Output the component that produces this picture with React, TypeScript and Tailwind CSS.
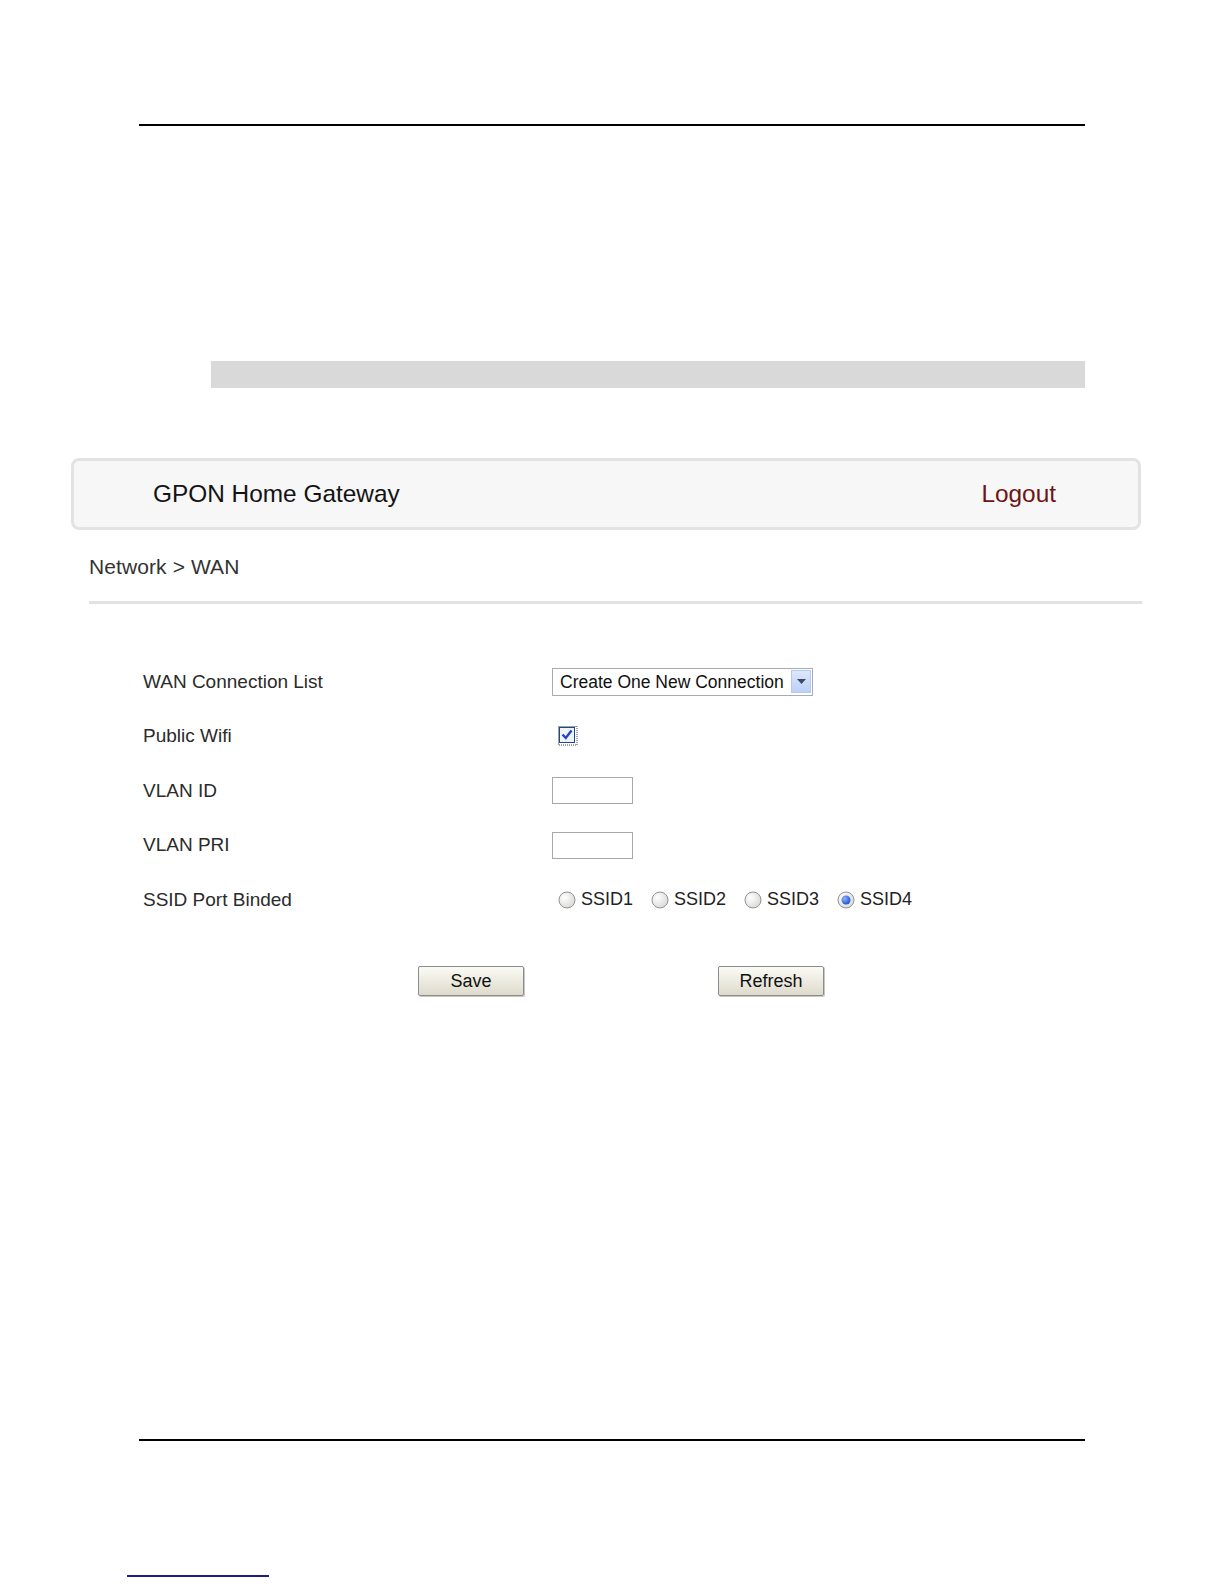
import React from "react";

const font = { fontFamily: '"Liberation Sans", Arial, sans-serif' };

function Radio({ checked }: { checked?: boolean }) {
  return (
    <svg width="18" height="18" viewBox="0 0 18 18" className="shrink-0">
      <defs>
        <radialGradient id={checked ? "rgc" : "rgu"} cx="0.35" cy="0.35" r="0.8">
          <stop offset="0" stopColor="#ffffff" />
          <stop offset="1" stopColor="#d4d4d0" />
        </radialGradient>
        <radialGradient id="dot" cx="0.35" cy="0.35" r="0.7">
          <stop offset="0" stopColor="#8fb4ff" />
          <stop offset="1" stopColor="#1f4fcf" />
        </radialGradient>
      </defs>
      <circle cx="9" cy="9" r="8" fill={`url(#${checked ? "rgc" : "rgu"})`} stroke="#8e9498" strokeWidth="1" />
      {checked && <circle cx="9" cy="9" r="4.5" fill="url(#dot)" />}
    </svg>
  );
}

function Row({ label, children }: { label: string; children?: React.ReactNode }) {
  return (
    <div className="flex h-[54.5px] items-center">
      <div className="w-[552px] shrink-0 pl-[143px] text-[19px] text-[#2b2b2b]">{label}</div>
      <div className="flex items-center">{children}</div>
    </div>
  );
}

function Btn({ children }: { children: React.ReactNode }) {
  return (
    <div className="flex h-[30px] w-[106px] items-center justify-center rounded-[2px] border border-[#8c8c8c] bg-gradient-to-b from-[#fbfbf6] to-[#dedbcc] text-[18px] text-[#111] shadow-[1px_1px_0_#c8c8c0]">
      {children}
    </div>
  );
}

export default function App() {
  return (
    <div className="h-[1584px] w-[1224px] overflow-hidden bg-white" style={font}>
      <div className="h-[124px]" />
      <div className="ml-[139px] h-[2px] w-[946px] bg-black" />
      <div className="ml-[211px] mt-[235px] h-[27px] w-[874px] bg-[#d9d9d9]" />

      <div className="ml-[71px] mt-[70px] flex h-[72px] w-[1070px] items-center justify-between rounded-[8px] border-[3px] border-[#e3e3e3] bg-[#f7f7f7] pl-[79px] pr-[82px]">
        <span className="text-[24.4px] text-[#141414]">GPON Home Gateway</span>
        <span className="text-[24.4px] text-[#6e1414]">Logout</span>
      </div>

      <div className="ml-[89px] mt-[25px] h-[24px] text-[21px] leading-[24px] tracking-[0.1px] text-[#333]">
        Network &gt; WAN
      </div>
      <div className="ml-[89px] mt-[22px] h-[3px] w-[1053px] bg-[#e2e2e2]" />

      <div className="mt-[50.5px]">
        <Row label="WAN Connection List">
          <div className="flex h-[28px] w-[261px] items-center justify-between border border-[#a5acb2] bg-white pl-[7px] pr-[1px]">
            <span className="text-[17.5px] text-[#111]">Create One New Connection</span>
            <div className="flex h-[23px] w-[20px] items-center justify-center border border-[#b5c8ef] bg-gradient-to-b from-[#dde7fc] to-[#bcd0f7]">
              <svg width="9" height="5" viewBox="0 0 9 5">
                <path d="M0 0 L9 0 L4.5 5 Z" fill="#3c4a68" />
              </svg>
            </div>
          </div>
        </Row>
        <Row label="Public Wifi">
          <svg width="20" height="20" viewBox="0 0 20 20" className="ml-[6px]">
            <rect x="1.5" y="1.5" width="15" height="15" fill="#eef2fb" stroke="#1c4a84" strokeWidth="1" />
            <rect x="0.5" y="0.5" width="18.5" height="18.5" fill="none" stroke="#444" strokeWidth="1" strokeDasharray="1 1" />
            <path d="M4.5 8.5 L7.8 12 L13.5 4.5" fill="none" stroke="#2346b8" strokeWidth="2.4" />
          </svg>
        </Row>
        <Row label="VLAN ID">
          <div className="h-[27px] w-[81px] border border-[#a8a8a8] bg-white" />
        </Row>
        <Row label="VLAN PRI">
          <div className="h-[27px] w-[81px] border border-[#a8a8a8] bg-white" />
        </Row>
        <Row label="SSID Port Binded">
          <div className="ml-[6px] flex items-center gap-[18px] text-[18px] text-[#222]">
            <div className="flex items-center gap-[5px]"><Radio /><span>SSID1</span></div>
            <div className="flex items-center gap-[5px]"><Radio /><span>SSID2</span></div>
            <div className="flex items-center gap-[5px]"><Radio /><span>SSID3</span></div>
            <div className="flex items-center gap-[5px]"><Radio checked /><span>SSID4</span></div>
          </div>
        </Row>
      </div>

      <div className="mt-[39px] flex pl-[418px]">
        <Btn>Save</Btn>
        <div className="w-[194px]" />
        <Btn>Refresh</Btn>
      </div>

      <div className="ml-[139px] mt-[443px] h-[2px] w-[946px] bg-black" />
      <div className="ml-[127px] mt-[134px] h-[1.5px] w-[142px] bg-[#1c1c8c]" />
    </div>
  );
}
